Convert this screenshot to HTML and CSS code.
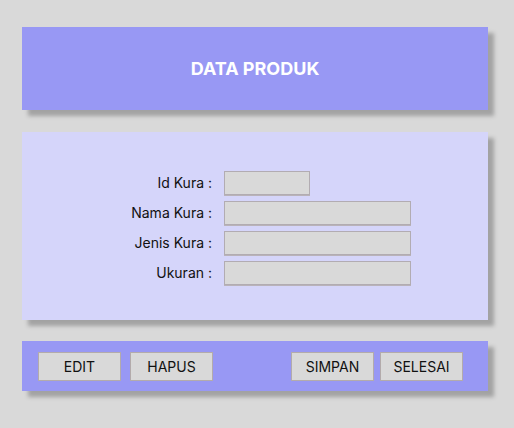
FILE: index.html
```html
<!DOCTYPE html>
<html lang="id">
<head>
<meta charset="utf-8">
<title>Data Produk</title>
<link rel="stylesheet" href="styles.css">
</head>
<body>
<div class="page">
  <header class="header">
    <h1 class="title">DATA PRODUK</h1>
  </header>
  <section class="panel">
    <form class="form">
      <label class="label" for="id">Id Kura :</label>
      <input class="field field-short" id="id" type="text">
      <label class="label" for="nama">Nama Kura :</label>
      <input class="field" id="nama" type="text">
      <label class="label" for="jenis">Jenis Kura :</label>
      <input class="field" id="jenis" type="text">
      <label class="label" for="ukuran">Ukuran :</label>
      <input class="field" id="ukuran" type="text">
    </form>
  </section>
  <footer class="footer">
    <button class="btn" type="button">EDIT</button>
    <button class="btn btn-gap" type="button">HAPUS</button>
    <button class="btn btn-push" type="button">SIMPAN</button>
    <button class="btn btn-tight" type="button">SELESAI</button>
  </footer>
</div>
</body>
</html>
```
FILE: styles.css
```css
* { box-sizing: border-box; }
html, body {
  margin: 0;
  padding: 0;
  background: #d9d9d9;
  font-family: Inter, "Noto Sans", "Liberation Sans", sans-serif;
  color: #111;
}
.page {
  width: 514px;
  height: 428px;
  padding: 27px 26px 0 22px;
  display: flex;
  flex-direction: column;
}
.header, .panel, .footer {
  width: 466px;
  box-shadow: 6px 6px 4px rgba(0, 0, 0, 0.25);
}
.header {
  height: 83px;
  background: #9898f4;
  display: flex;
  align-items: center;
  justify-content: center;
}
.title {
  margin: 0;
  color: #fff;
  font-size: 18px;
  font-weight: 700;
  letter-spacing: 0;
}
.panel {
  margin-top: 22px;
  height: 188px;
  background: #d5d5fa;
  padding-top: 39px;
}
.form {
  margin: 0;
  display: grid;
  grid-template-columns: 190px 187px;
  column-gap: 12px;
  row-gap: 6px;
}
.label {
  font-size: 14px;
  text-align: right;
  line-height: 24px;
  color: #111;
}
.field {
  height: 24px;
  width: 187px;
  margin: 0;
  padding: 0 4px;
  background: #d9d9d9;
  border: 1px solid #b2acb2;
  border-radius: 0;
  box-shadow: 0 1px 0 #b9b3b9;
  font: inherit;
}
.field-short { width: 86px; }
.footer {
  margin-top: 21px;
  height: 50px;
  background: #9898f4;
  display: flex;
  align-items: flex-start;
  padding: 11px 25px 0 16px;
}
.btn {
  width: 83px;
  height: 29px;
  margin: 0;
  padding: 0;
  background: #d9d9d9;
  border: 1px solid #b3abab;
  border-radius: 0;
  font-family: inherit;
  font-size: 14px;
  color: #111;
  cursor: pointer;
}
.btn-gap { margin-left: 9px; }
.btn-push { margin-left: auto; }
.btn-tight { margin-left: 6px; }
```
